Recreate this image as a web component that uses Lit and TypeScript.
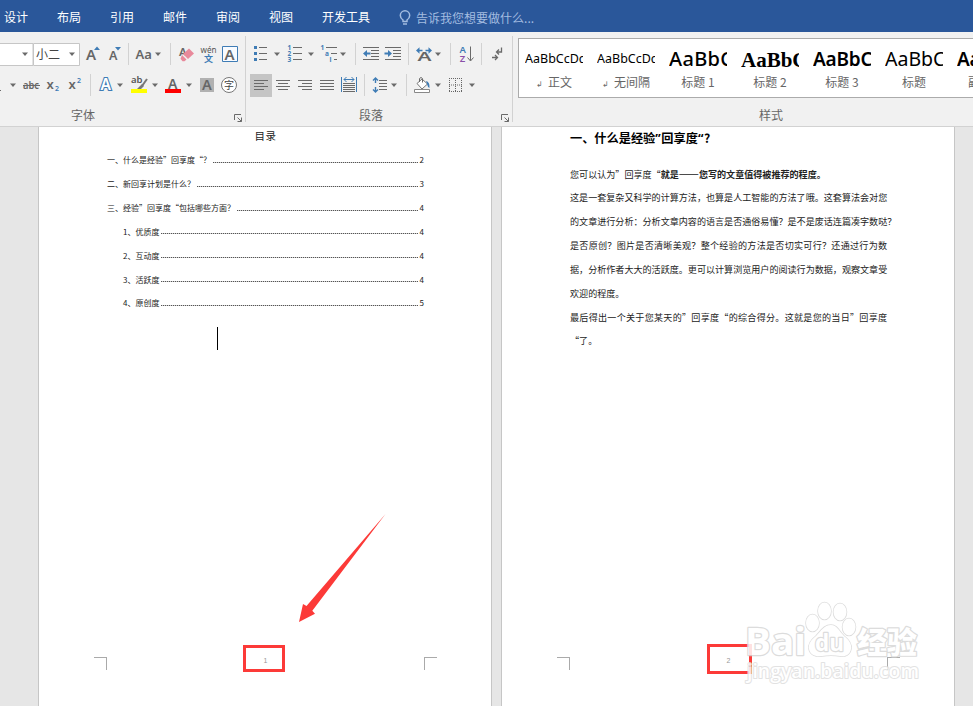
import { LitElement, html, css, svg, nothing, SVGTemplateResult } from "lit";
import { customElement, property } from "lit/decorators.js";

type Tool = [width: number, art: SVGTemplateResult | typeof nothing];

const caret = (cx: number, cy: number) =>
  svg`<path class="caret" d="M${cx - 3} ${cy - 1.5}h6l-3 3.5z"/>`;
const rule = (x: number, y: number) => svg`<path class="rule" d="M${x + 0.5} ${y}v22"/>`;
const bars = (rows: [number, number, number][]) =>
  svg`<path class="bar" d=${rows.map(([x, y, w]) => `M${x} ${y + 0.5}h${w}`).join("")}/>`;

/* Tools are laid side by side; each one draws in ribbon coordinates. */
const fontTop: Tool[] = [
  [33, svg`<path class="field" d="M-2 43.5H33V65.5H-2"/>${caret(25, 54)}`],
  [47, svg`<path class="field" d="M33.500 43.5H79.500V65.500H33.500z"/><text x="36" y="59" class="cn" fill="#333">小二</text>${caret(72, 54)}`],
  [23, svg`<text x="86" y="60" class="glyph" font-size="15">A</text><path class="blue" d="M94 50l3-3.500 3 3.500z"/>`],
  [21, svg`<text x="109" y="60" class="glyph" font-size="12.500">A</text><path class="blue" d="M115 47h6l-3 3.500z"/>`],
  [8, rule(128, 43)],
  [34, svg`<text x="135.500" y="58.500" class="glyph" font-size="13">Aa</text>${caret(158, 54)}`],
  [8, rule(170, 43)],
  [23, svg`<text x="179" y="56" class="glyph" font-size="11.500">A</text><path fill="#e8899b" d="M189 48.500l5 5-6 5.500-5-5z"/><path fill="#e8899b" d="M182 55l4.500 4.500-2 1.800h-2l-2-2.500z"/>`],
  [22, svg`<text x="200.500" y="53" font-size="9" textLength="16" lengthAdjust="spacingAndGlyphs" class="plain">wén</text><text x="204" y="61.500" class="cnb" font-size="9">文</text>`],
  [26, svg`<path d="M222.500 46.500h15v15h-15z" fill="#f8fbff" stroke="#3f7cb5"/><text x="224.500" y="59.500" class="glyph" font-size="15">A</text>`],
];

const fontBottom: Tool[] = [
  [20, svg`<path class="bar" d="M0 90.500h1"/>${caret(13, 85)}`],
  [23, svg`<text x="23" y="89" font-size="10.500" class="glyph" textLength="16" lengthAdjust="spacingAndGlyphs">abc</text><path class="bar" d="M23 85.500h17"/>`],
  [22, svg`<text x="46.500" y="89" class="glyph" font-size="13">x</text><text x="55" y="91" class="glyph tint" font-size="7">2</text>`],
  [20, svg`<text x="68.500" y="89" class="glyph" font-size="13">x</text><text x="77" y="83" class="glyph tint" font-size="7">2</text>`],
  [10, rule(90, 74)],
  [32, svg`<text x="100.500" y="90" font-size="15.500" class="outlined">A</text>${caret(120, 85)}`],
  [34, svg`<text x="131" y="83" class="plain" font-size="9.500" font-weight="600">ab</text><path d="M147 79l-5 7" stroke="#777" stroke-width="2"/><path d="M142 84l2 2-3 3h-4z" fill="#777"/><path fill="#ff0" d="M131 89h16v4h-16z"/>${caret(155, 85)}`],
  [34, svg`<text x="168" y="88.500" class="glyph" font-size="14">A</text><path fill="#fe0000" d="M165 89h16v4h-16z"/>${caret(189, 85)}`],
  [22, svg`<path fill="#b1b1b1" d="M200 78h14v14h-14z"/><text x="202" y="90" class="glyph" font-size="14.500">A</text>`],
  [28, svg`<circle cx="229" cy="85" r="7.500" fill="#fff" stroke="#777"/><text x="224" y="89" class="cn small">字</text>`],
];

const paraTop: Tool[] = [
  [37, svg`<path class="blue" d="M254 46h3v3h-3zM254 52h3v3h-3zM254 58h3v3h-3z"/>${bars([[259, 47, 8], [259, 53, 8], [259, 59, 8]])}${caret(277, 54)}`],
  [34, svg`<g class="tiny"><text x="287.500" y="50">1</text><text x="287.500" y="56">2</text><text x="287.500" y="62">3</text></g>${bars([[293, 47, 9], [293, 53, 9], [293, 59, 9]])}${caret(311, 54)}`],
  [36, svg`<g class="tiny"><text x="320.500" y="50">1</text><text x="325" y="56">a</text><text x="329.500" y="62">i</text></g>${bars([[326, 47, 11], [331, 53, 6], [334, 59, 3]])}${caret(343, 54)}`],
  [8, rule(355, 43)],
  [21, svg`${bars([[363, 47, 16], [371, 50, 8], [371, 53, 8], [371, 56, 8], [363, 59, 16]])}<path class="blue" d="M363 53.500l4-3.500v2.500h3.500v2H367v2.500z"/>`],
  [21, svg`${bars([[385, 47, 16], [393, 50, 8], [393, 53, 8], [393, 56, 8], [385, 59, 16]])}<path class="blue" d="M392 53.500l-4-3.500v2.500h-3.500v2H388v2.500z"/>`],
  [8, rule(408, 43)],
  [33, svg`<text x="417.500" y="60.500" class="glyph" font-size="13" textLength="14" lengthAdjust="spacingAndGlyphs">A</text><path class="blue" d="M416 50.500l3.500-3.300v2.500h3v1.600h-3v2.500zM432 50.500l-3.500-3.300v2.500h-3v1.600h3v2.500z"/>${caret(438, 54)}`],
  [8, rule(450, 43)],
  [24, svg`<text x="459.500" y="53" class="glyph tint" font-size="9.500">A</text><text x="459.800" y="61.500" class="glyph violet" font-size="9.500">Z</text><path class="line" d="M470.500 46.500v14M467.500 57.500l3 3.500 3-3.500"/>`],
  [8, rule(481, 43)],
  [28, svg`<path class="line" d="M501.500 47.500v4.500h-5M499 49.500l-2.500 2.500 2.500 2.500M492 57.500h5.500M495 55l2.500 2.500-2.500 2.500" stroke-width="1.300"/>`],
];

const paraBottom: Tool[] = [
  [26, svg`<path fill="#c5c5c5" d="M250 74h22v23h-22z"/>${bars([[254, 80, 14], [254, 83, 10], [254, 86, 14], [254, 89, 10]])}`],
  [22, bars([[276, 80, 14], [278, 83, 10], [276, 86, 14], [278, 89, 10]])],
  [22, bars([[298, 80, 14], [302, 83, 10], [298, 86, 14], [302, 89, 10]])],
  [22, bars([[320, 80, 14], [320, 83, 14], [320, 86, 14], [320, 89, 14]])],
  [22, svg`<path d="M341.500 77v15M356.500 77v15M344 79.500h10M346.500 77l-2.500 2.500 2.500 2.500M351.500 77l2.500 2.500-2.500 2.500" stroke="#3f7cb5" fill="none"/>${bars([[343, 83, 12], [343, 85, 12], [343, 87, 12], [343, 89, 12], [343, 91, 12]])}`],
  [7, rule(364, 74)],
  [34, svg`<path d="M375.500 78v5M375.500 87v5M373 80.500l2.500-2.500 2.500 2.500M373 89.500l2.500 2.500 2.500-2.500" stroke="#3f7cb5" stroke-width="1.400" fill="none"/>${bars([[379, 80, 8], [379, 83, 8], [379, 86, 8], [379, 89, 8]])}${caret(394, 85)}`],
  [8, rule(406, 74)],
  [34, svg`<path d="M417 83.500l5-4.500 5.500 5-5.500 5z" fill="#fff" stroke="#777"/><path d="M419.500 82v-3.500q1.500-2 3 0v4" class="line"/><path d="M426 81q4 1 3.500 7-2-1-2.500-4z" class="blue"/><path d="M414.500 89.500h15v3h-15z" fill="#fff" stroke="#888"/>${caret(438, 85)}`],
  [40, svg`<path d="M449 78.500h13M449 85h13M449 91.500h13M449.500 78v14M455.500 78v14M461.500 78v14" stroke="#666" stroke-dasharray="1 1"/>${caret(472, 85)}`],
];

@customElement("ribbon-group")
class RibbonGroup extends LitElement {
  @property({ type: Number }) start = 0;
  @property({ type: Number }) inset = 0;
  @property() label = "";
  @property({ attribute: false }) rows: Tool[][] = [];

  static styles = css`
    :host { display: flex; flex: none; flex-direction: column; height: 86px; margin-top: 4px; padding-top: 6px; box-sizing: border-box; border-right: 1px solid #d2d2d2; }
    .row { display: flex; height: 24px; margin-bottom: 7px; }
    svg { display: block; flex: none; height: 24px; }
    .foot { display: flex; justify-content: center; position: relative; font: 12px/20px "Noto Sans CJK SC", sans-serif; color: #666; margin-top: 1px; }
    .launch { position: absolute; right: 2px; top: 9px; width: 9px; height: 9px; }
    .caret { fill: #6a6a6a; }
    .rule { stroke: #d2d2d2; }
    .bar, .line { stroke: #6a6a6a; fill: none; }
    .field { fill: #fff; stroke: #c6c6c6; }
    .blue { fill: #3f7cb5; }
    .cn { font-family: "Noto Sans CJK SC", sans-serif; font-size: 12px; fill: #444; }
    .small { font-size: 10px; }
    .cnb { font-family: "Noto Sans CJK SC", sans-serif; font-weight: 700; fill: #3f7cb5; }
    .plain { font-family: "Noto Sans", sans-serif; fill: #555; }
    .glyph { font-family: "Noto Sans", sans-serif; font-weight: 600; fill: #666; }
    .tint { fill: #3f7cb5; }
    .violet { fill: #8a4fa8; }
    .tiny { font: 700 6.500px "Noto Sans", sans-serif; fill: #3f7cb5; }
    .outlined { font-family: "Noto Sans", sans-serif; font-weight: 600; fill: #fff; stroke: #3f7cb5; stroke-width: 2.200px; paint-order: stroke; }
  `;

  render() {
    return html`${this.rows.map((row, i) => {
        let x = this.start;
        const top = i === 0 ? 42 : 73;
        return html`<div class="row">${row.map(([w, art]) => {
          const box = `${x} ${top} ${w} 24`;
          x += w;
          return html`<svg width=${w} viewBox=${box}>${art}</svg>`;
        })}</div>`;
      })}
      <div class="foot" style="padding-right:${this.inset}px"><span>${this.label}</span>
        <svg class="launch" viewBox="0 0 9 9"><path class="line" d="M.5 6V.5H7M3.500 3.500l4 4M7.500 3.500v4h-4"/></svg>
      </div>`;
  }
}

const tabs = ["设计", "布局", "引用", "邮件", "审阅", "视图", "开发工具"];
const gallery = [
  { look: "body", sample: "AaBbCcDd", name: "正文", mark: true },
  { look: "body", sample: "AaBbCcDd", name: "无间隔", mark: true },
  { look: "h1", sample: "AaBbC", name: "标题 1" },
  { look: "h2", sample: "AaBbC", name: "标题 2" },
  { look: "h3", sample: "AaBbC", name: "标题 3" },
  { look: "title", sample: "AaBbC", name: "标题" },
  { look: "h3", sample: "AaBbC", name: "副标题" },
];
const toc: [string, string, boolean][] = [
  ["一、什么是经验”回享度“？", "2", false],
  ["二、新回享计划是什么？", "3", false],
  ["三、经验”回享度“包括哪些方面？", "4", false],
  ["1、优质度", "4", true],
  ["2、互动度", "4", true],
  ["3、活跃度", "4", true],
  ["4、原创度", "5", true],
];
const prose: [string, boolean][] = [
  ["这是一套复杂又科学的计算方法，也算是人工智能的方法了哦。这套算法会对您", false],
  ["的文章进行分析：分析文章内容的语言是否通俗易懂？是不是废话连篇凑字数哒？", false],
  ["是否原创？图片是否清晰美观？整个经验的方法是否切实可行？还通过行为数", true],
  ["据，分析作者大大的活跃度。更可以计算浏览用户的阅读行为数据，观察文章受", false],
  ["欢迎的程度。", false],
  ["最后得出一个关于您某天的”回享度“的综合得分。这就是您的当日”回享度", true],
  ["“了。", false],
];

@customElement("app-root")
class AppRoot extends LitElement {
  static styles = css`
    :host { display: flex; flex-direction: column; position: relative; width: 973px; height: 706px; overflow: hidden; background: #e6e6e6; font-family: "Noto Sans CJK SC", sans-serif; }
    .tabs { flex: none; display: flex; align-items: center; gap: 29px; height: 32px; box-sizing: border-box; padding: 2px 0 0 4px; background: #2a579a; color: #fff; font-size: 12px; line-height: 18px; white-space: nowrap; }
    .ask { display: flex; align-items: center; gap: 5px; color: #a3bce0; padding-top: 1px; }
    .ask svg { width: 12px; height: 16px; }
    .ribbon { flex: none; display: flex; height: 95px; box-sizing: border-box; background: #f1f1f1; border-bottom: 1px solid #d2d2d2; }
    .styles { flex: 1; min-width: 0; padding: 6px 0 0 5px; }
    .gallery { display: flex; height: 60px; box-sizing: border-box; border: 1px solid #ababab; border-right: 0; background: #fff; overflow: hidden; padding-left: 6px; }
    .style { flex: none; width: 58px; margin-right: 14px; }
    .sample { height: 28px; margin-top: 6px; line-height: 28px; overflow: hidden; white-space: nowrap; color: #000; font-family: "Noto Sans", sans-serif; }
    .sample.body { font-size: 12.500px; }
    .sample.h1 { font-size: 20px; font-weight: 500; letter-spacing: 0.300px; }
    .sample.h2 { font: 700 21px/30px "Liberation Serif", serif; }
    .sample.h3 { font-size: 19px; font-weight: 600; letter-spacing: -0.200px; }
    .sample.title { font-size: 19.500px; }
    .name { font-size: 12px; line-height: 18px; text-align: center; color: #666; white-space: nowrap; }
    .mark { font-size: 8px; margin-right: 5px; }
    .cap { margin: 9px 0 0 241px; font-size: 12px; line-height: 16px; color: #666; }
    .desk { flex: 1; min-height: 0; display: flex; gap: 9px; padding-left: 38px; }
    .page { display: flex; flex-direction: column; width: 454px; box-sizing: border-box; background: #fff; border: solid #c6c6c6; border-width: 0 1px; color: #222; }
    .main { height: 530px; box-sizing: border-box; }
    .first .main { padding: 0 67px 0 68px; }
    .second .main { padding: 0 0 0 68px; }
    h1 { margin: 0 0 3.500px; font-size: 10.500px; line-height: 18px; font-weight: 400; text-align: center; letter-spacing: 0.500px; }
    .entry { display: flex; align-items: center; height: 23.850px; font-size: 8px; line-height: 24px; white-space: nowrap; }
    .entry.sub { padding-left: 16px; }
    .dots { flex: 1; height: 1px; margin: 4px 2px 0; background: repeating-linear-gradient(90deg, #555 0 1px, #ccc 1px 2px); }
    .caretbar { width: 1px; height: 23px; margin: 11.500px 0 0 110px; background: #000; }
    h2 { margin: 0 0 11.500px; font-size: 12.200px; line-height: 22px; font-weight: 700; color: #000; white-space: nowrap; }
    .q { font-family: "Noto Sans", sans-serif; letter-spacing: 0.600px; }
    .line { height: 23.850px; font-size: 9.070px; line-height: 24px; white-space: nowrap; }
    .line.spread { letter-spacing: 0.270px; }
    .dash { font-size: 12px; line-height: 1; font-weight: 400; }
    .footer { display: flex; justify-content: space-between; padding: 0 54px 0 55px; font: 7px/8px "Liberation Sans", sans-serif; color: #999; }
    .crop { width: 13px; height: 13px; box-sizing: border-box; border: solid #aaa; border-width: 1px 1px 0 0; }
    .crop.right { border-width: 1px 0 0 1px; }
    .notes { position: absolute; left: 0; top: 0; width: 973px; height: 706px; }
    .red { fill: none; stroke: #fc3a38; stroke-width: 3px; }
    .arrow { fill: #fc3a38; }
    .wm { fill: #fff; stroke: #d6d6d6; stroke-width: 2.400px; paint-order: stroke; stroke-linejoin: round; }
    .latin { font-family: "Open Sans", sans-serif; font-weight: 700; }
    .url { font-family: "Open Sans", sans-serif; font-weight: 600; stroke-width: 2px; stroke: #dedede; }
    .han { font-family: "Noto Sans CJK SC", sans-serif; font-weight: 900; }
  `;

  private footer(no: string) {
    return html`<div class="footer"><span class="crop"></span><span>${no}</span><span class="crop right"></span></div>`;
  }

  render() {
    return html`
      <nav class="tabs">${tabs.map((t) => html`<span>${t}</span>`)}
        <span class="ask"><svg viewBox="0 0 12 16" fill="none" stroke="#a3bce0" stroke-width="1.500"><path d="M4 11.500V10Q1.300 8 1.300 5.500a4.700 4.700 0 0 1 9.400 0Q10.700 8 8 10v1.500zM4 14h4"/></svg>告诉我您想要做什么...</span>
      </nav>
      <div class="ribbon">
        <ribbon-group .start=${0} .inset=${79} label="字体" .rows=${[fontTop, fontBottom]}></ribbon-group>
        <ribbon-group .start=${246} .inset=${16} label="段落" .rows=${[paraTop, paraBottom]}></ribbon-group>
        <div class="styles">
          <div class="gallery">${gallery.map((s) => html`<div class="style">
            <div class="sample ${s.look}">${s.sample}</div>
            <div class="name">${s.mark ? html`<span class="mark">↲</span>` : nothing}${s.name}</div>
          </div>`)}</div>
          <div class="cap">样式</div>
        </div>
      </div>
      <div class="desk">
        <section class="page first">
          <div class="main">
            <h1>目录</h1>
            ${toc.map(([t, n, sub]) => html`<div class="entry ${sub ? "sub" : ""}"><span>${t}</span><i class="dots"></i><span>${n}</span></div>`)}
            <div class="caretbar"></div>
          </div>
          ${this.footer("1")}
        </section>
        <section class="page second">
          <div class="main">
            <h2>一、什么是经验<span class="q">”</span>回享度<span class="q">“</span>?</h2>
            <div class="line">您可以认为”回享度“<b>就是<span class="dash">——</span>您写的文章值得被推荐的程度。</b></div>
            ${prose.map(([l, spread]) => html`<div class="line ${spread ? "spread" : ""}">${l}</div>`)}
          </div>
          ${this.footer("2")}
        </section>
      </div>
      <svg class="notes" viewBox="0 0 973 706">
        <path class="red" d="M244.500 646.500h39v24h-39zM708.500 645.500h42v27h-42z"/>
        <path class="arrow" d="M299 622l4-18 3.500 2L385.500 514 312.300 610.700l2.700 3z"/>
        <g class="wm" opacity="0.850">
          <text class="latin" x="745" y="655" font-size="38" textLength="61" lengthAdjust="spacingAndGlyphs">Bai</text>
          <g stroke-width="1.500"><ellipse cx="812.500" cy="623" rx="6.500" ry="8.500"/><ellipse cx="824.500" cy="611" rx="6.500" ry="8.500"/><ellipse cx="840" cy="612" rx="6.500" ry="8.500"/><ellipse cx="849" cy="627" rx="6.500" ry="8.500"/>
          <path d="M831 625c6 0 8 6 13 11 5 4 8 8 7 13-1 6-6 8-11 7-6-1-12-1-18 0-6 1-12-1-13-7-1-5 2-9 7-13 5-5 8-11 15-11z"/></g>
          <text class="latin" x="815" y="651" font-size="23" textLength="29" lengthAdjust="spacingAndGlyphs">du</text>
          <text class="han" x="857" y="653" font-size="30">经验</text>
          <text class="url" x="747" y="678" font-size="19" textLength="172" lengthAdjust="spacingAndGlyphs">jingyan.baidu.com</text>
        </g>
      </svg>`;
  }
}
